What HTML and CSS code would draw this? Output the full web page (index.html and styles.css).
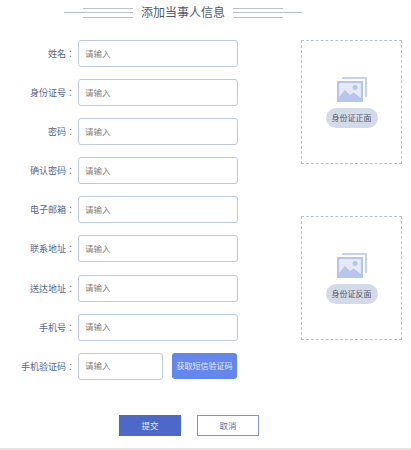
FILE: index.html

```html
<!DOCTYPE html>
<html lang="zh-CN">
<head>
  <meta charset="UTF-8">
  <meta name="viewport" content="width=device-width, initial-scale=1.0">
  <title>添加当事人信息</title>
  <link rel="stylesheet" href="styles.css">
</head>
<body>
  <header class="title">
    <span class="rule rule-left"></span>
    <h1>添加当事人信息</h1>
    <span class="rule rule-right"></span>
  </header>
  <div class="content">
    <form class="fields">
      <div class="row"><label>姓名：</label><input type="text" placeholder="请输入"></div>
      <div class="row"><label>身份证号：</label><input type="text" placeholder="请输入"></div>
      <div class="row"><label>密码：</label><input type="text" placeholder="请输入"></div>
      <div class="row"><label>确认密码：</label><input type="text" placeholder="请输入"></div>
      <div class="row"><label>电子邮箱：</label><input type="text" placeholder="请输入"></div>
      <div class="row"><label>联系地址：</label><input type="text" placeholder="请输入"></div>
      <div class="row"><label>送达地址：</label><input type="text" placeholder="请输入"></div>
      <div class="row"><label>手机号：</label><input type="text" placeholder="请输入"></div>
      <div class="row">
        <label>手机验证码：</label>
        <input class="code" type="text" placeholder="请输入">
        <button class="send" type="button">获取短信验证码</button>
      </div>
    </form>
    <aside class="uploads">
      <div class="upload">
        <svg class="pic" viewBox="0 0 30 25" width="30" height="25">
          <path class="back" d="M5 0H30V20H28V2H5Z"/>
          <rect class="inner" x="1" y="5" width="24" height="19"/>
          <path class="front" fill-rule="evenodd" d="M0 4H26V25H0ZM2 6V20L8 13L13 18L16.500 15.500L24 21V6Z"/>
          <circle class="front" cx="18" cy="10.500" r="2.500"/>
        </svg>
        <span class="tag">身份证正面</span>
      </div>
      <div class="upload">
        <svg class="pic" viewBox="0 0 30 25" width="30" height="25">
          <path class="back" d="M5 0H30V20H28V2H5Z"/>
          <rect class="inner" x="1" y="5" width="24" height="19"/>
          <path class="front" fill-rule="evenodd" d="M0 4H26V25H0ZM2 6V20L8 13L13 18L16.500 15.500L24 21V6Z"/>
          <circle class="front" cx="18" cy="10.500" r="2.500"/>
        </svg>
        <span class="tag">身份证反面</span>
      </div>
    </aside>
  </div>
  <div class="actions">
    <button class="submit" type="button">提交</button>
    <button class="cancel" type="button">取消</button>
  </div>
</body>
</html>
```

FILE: styles.css

```css
* {
  box-sizing: border-box;
}
body {
  margin: 0;
  height: 450px;
  overflow: hidden;
  background-color: #fff;
  border-bottom: 2px solid #e4e4e4;
  font-family: "Noto Sans CJK SC", "Liberation Sans", sans-serif;
}
.title {
  display: flex;
  align-items: center;
  justify-content: center;
  gap: 8px;
  width: 366px;
  height: 25px;
}
.title h1 {
  margin: 0 0 2px;
  font-size: 12px;
  font-weight: 400;
  color: #4d5a70;
}
.rule {
  width: 69px;
  height: 10px;
  background-repeat: no-repeat;
  background-image:
    linear-gradient(#b9c0cc, #b9c0cc),
    linear-gradient(#b9c0cc, #b9c0cc),
    linear-gradient(#b9c0cc, #b9c0cc);
}
.rule-left {
  background-size: 50px 1px, 69px 1px, 50px 1px;
  background-position: right top, right 4px, right 9px;
}
.rule-right {
  background-size: 50px 1px, 69px 1px, 50px 1px;
  background-position: left top, left 4px, left 9px;
}
.content {
  display: flex;
  margin-top: 15px;
}
.fields {
  display: flex;
  flex-direction: column;
  gap: 12.1px;
  width: 238px;
}
.row {
  display: flex;
  align-items: center;
  height: 27px;
}
.row label {
  width: 78px;
  padding-right: 3px;
  text-align: right;
  font-family: "Noto Sans CJK TC", sans-serif;
  font-feature-settings: "locl" 0;
  font-size: 9px;
  color: #56658f;
}
.row input {
  flex: 1;
  min-width: 0;
  height: 27px;
  padding: 0 6px 2px;
  border: 1px solid #bccbe2;
  border-radius: 3px;
  font-family: inherit;
  font-size: 8.5px;
  outline: none;
}
.row input::placeholder {
  color: #808080;
}
.row .code {
  flex: none;
  width: 85px;
}
.send {
  width: 65px;
  height: 26px;
  margin-left: 9px;
  padding: 0 0 2px;
  border: none;
  border-radius: 3px;
  background-color: #6487ee;
  color: #e3e9fb;
  font-family: inherit;
  font-size: 8px;
}
.uploads {
  display: flex;
  flex-direction: column;
  gap: 52px;
  margin-left: 63px;
}
.upload {
  display: flex;
  flex-direction: column;
  align-items: center;
  justify-content: center;
  gap: 6px;
  width: 101px;
  height: 124px;
  border: 1px dashed #b7c2d8;
}
.pic .back {
  fill: #c6d2f0;
}
.pic .front {
  fill: #b6c5ec;
}
.pic .inner {
  fill: #e4eaf9;
}
.tag {
  width: 52px;
  height: 20px;
  border-radius: 10px;
  background-color: #d3dbe9;
  color: #4f5a6e;
  font-size: 8px;
  line-height: 19px;
  text-align: center;
}
.actions {
  display: flex;
  gap: 16px;
  margin-top: 35px;
  margin-left: 119px;
}
.actions button {
  width: 62px;
  height: 21px;
  padding: 0 0 1px;
  font-family: inherit;
  font-size: 8.5px;
}
.submit {
  border: none;
  background-color: #4c69c9;
  color: #e6ebf8;
}
.cancel {
  border: 1px solid #7f93ce;
  background-color: #fff;
  color: #5b6fa8;
}
```
